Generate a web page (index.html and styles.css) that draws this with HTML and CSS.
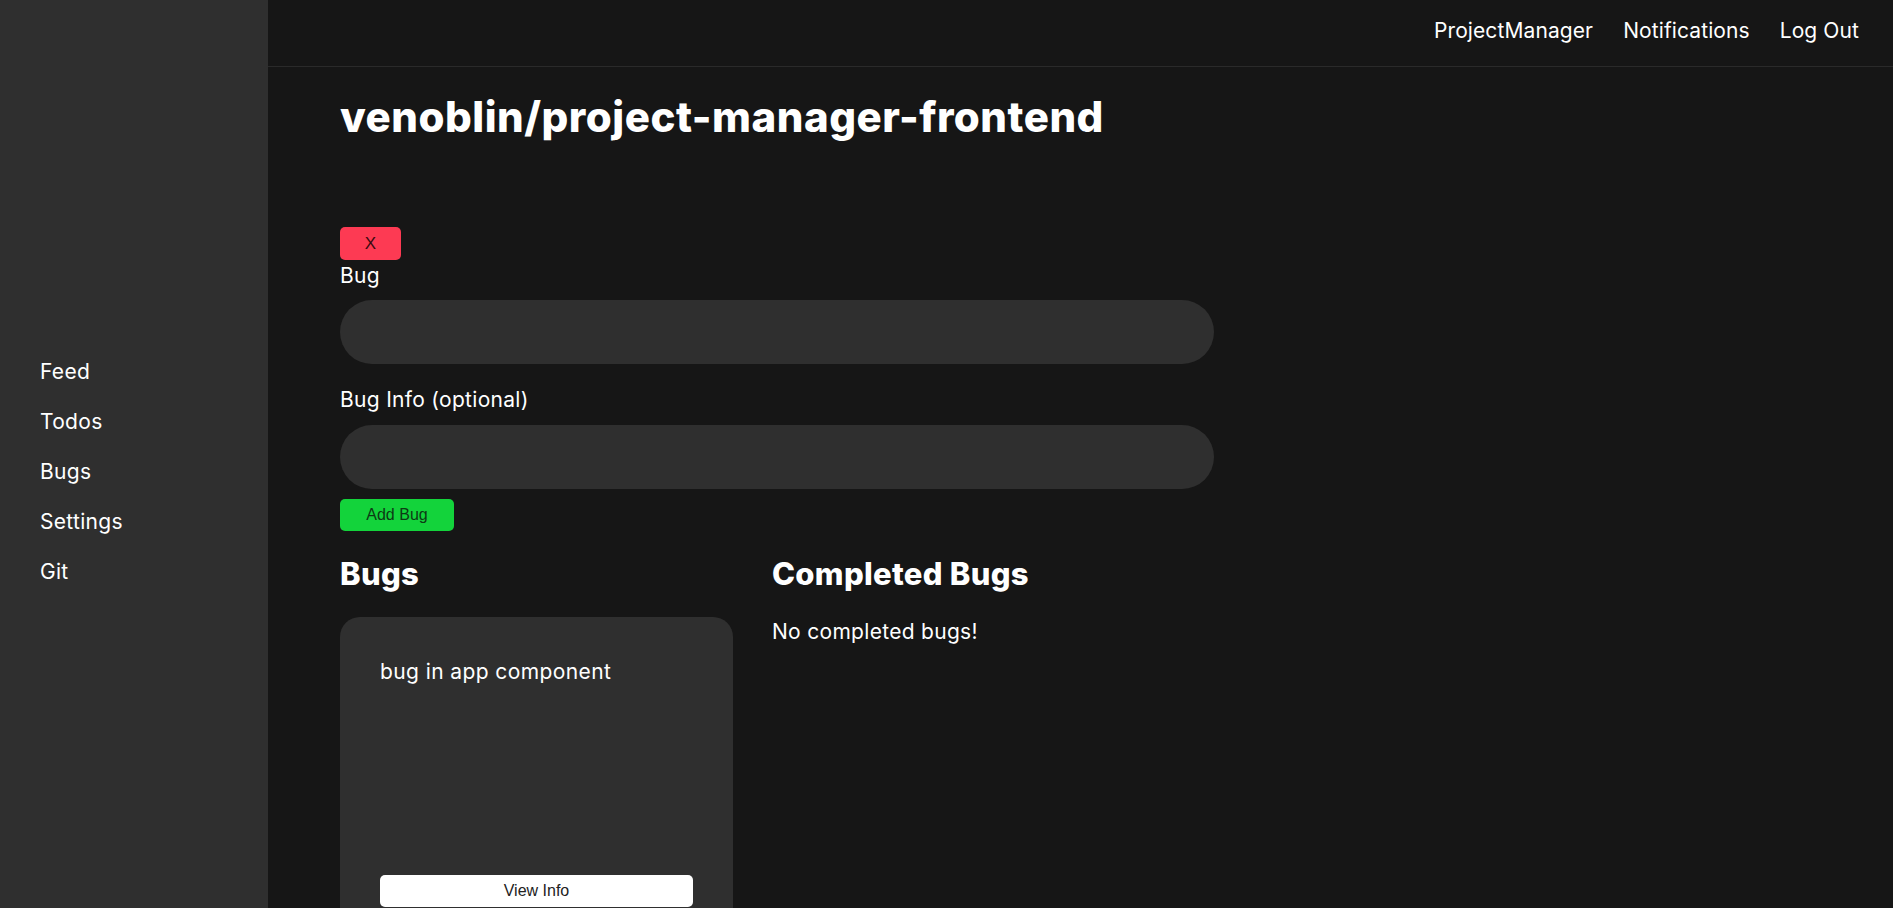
FILE: index.html
```html
<!DOCTYPE html>
<html lang="en">
<head>
<meta charset="utf-8">
<title>venoblin/project-manager-frontend</title>
<link rel="stylesheet" href="styles.css">
</head>
<body>
<aside class="sidebar">
  <a class="side-link" href="#">Feed</a>
  <a class="side-link" href="#">Todos</a>
  <a class="side-link" href="#">Bugs</a>
  <a class="side-link" href="#">Settings</a>
  <a class="side-link" href="#">Git</a>
</aside>
<div class="main">
  <header class="topbar">
    <nav class="topnav">
      <a href="#">ProjectManager</a>
      <a href="#">Notifications</a>
      <a href="#">Log Out</a>
    </nav>
  </header>
  <section class="content">
    <h1 class="title">venoblin/project-manager-frontend</h1>
    <form class="bug-form">
      <button type="button" class="btn btn-close">X</button>
      <label class="field-label" for="bug">Bug</label>
      <input class="field" id="bug" type="text">
      <label class="field-label label-info" for="info">Bug Info (optional)</label>
      <input class="field" id="info" type="text">
      <button type="button" class="btn btn-add">Add Bug</button>
    </form>
    <div class="columns">
      <div class="col">
        <h2 class="col-title">Bugs</h2>
        <div class="card">
          <p class="card-text">bug in app component</p>
          <button type="button" class="btn btn-view">View Info</button>
        </div>
      </div>
      <div class="col">
        <h2 class="col-title">Completed Bugs</h2>
        <p class="empty">No completed bugs!</p>
      </div>
    </div>
  </section>
</div>
</body>
</html>
```

FILE: styles.css
```css
* { box-sizing: border-box; }
html, body { height: 100%; }
body {
  margin: 0;
  background: #161616;
  color: #fff;
  font-family: "Inter", "Noto Sans", sans-serif;
  display: flex;
  overflow: hidden;
}
a { color: #fff; text-decoration: none; }

.sidebar {
  width: 268px;
  flex: 0 0 268px;
  height: 100vh;
  background: #2f2f2f;
  display: flex;
  flex-direction: column;
  justify-content: center;
  padding: 36px 0 0 40px;
}
.side-link {
  font-size: 21px;
  line-height: 50px;
  letter-spacing: 0.3px;
}

.main { flex: 1; min-width: 0; }

.topbar {
  height: 67px;
  border-bottom: 1px solid #2a2a2a;
  display: flex;
  align-items: center;
  justify-content: flex-end;
  padding: 0 34px 4px 0;
}
.topnav { display: flex; gap: 30px; }
.topnav a { font-size: 21px; line-height: 30px; letter-spacing: 0.1px; }

.content { padding: 26px 0 0 72px; }
.title {
  margin: 0;
  font-size: 42px;
  line-height: 48px;
  font-weight: 800;
  letter-spacing: 0.5px;
}

.bug-form {
  margin-top: 86px;
  width: 874px;
  display: flex;
  flex-direction: column;
  align-items: flex-start;
}
.btn {
  font-family: "Liberation Sans", Arial, sans-serif;
  border: none;
  border-radius: 5px;
  font-size: 16px;
  color: #111;
  cursor: pointer;
}
.btn-close {
  width: 61px;
  height: 33px;
  background: #fd3a53;
  color: #3a0a10;
  font-size: 17px;
}
.field-label {
  font-size: 21px;
  line-height: 30px;
  margin-top: 1px;
  letter-spacing: 0.3px;
}
.label-info { margin-top: 21px; }
.field {
  margin-top: 9px;
  width: 874px;
  height: 64px;
  border: none;
  border-radius: 32px;
  background: #2f2f2f;
  color: #fff;
  padding: 0 28px;
  font-size: 18px;
  outline: none;
}
.label-info + .field { margin-top: 10px; }
.btn-add {
  margin-top: 10px;
  width: 114px;
  height: 32px;
  background: #13d33b;
  color: #0d3a14;
}

.columns {
  margin-top: 26px;
  display: grid;
  grid-template-columns: 393px 393px;
  column-gap: 39px;
  align-items: start;
}
.col-title {
  margin: 0;
  font-size: 31px;
  line-height: 34px;
  font-weight: 800;
  letter-spacing: 0.3px;
}
.card {
  margin-top: 26px;
  height: 330px;
  background: #2f2f2f;
  border-radius: 20px;
  padding: 40px;
  display: flex;
  flex-direction: column;
  justify-content: space-between;
}
.card-text {
  margin: 0;
  font-size: 21px;
  line-height: 30px;
  letter-spacing: 0.4px;
}
.btn-view {
  width: 313px;
  height: 32px;
  background: #fff;
  color: #222;
}
.empty {
  margin: 26px 0 0;
  font-size: 21px;
  line-height: 30px;
  letter-spacing: 0.3px;
}
```
